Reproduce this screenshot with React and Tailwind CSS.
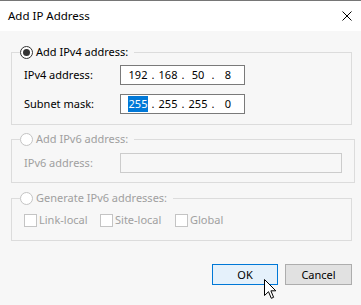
import React from "react";

const font = { fontFamily: '"Noto Sans", "Open Sans", sans-serif' };

function Radio({ checked, disabled }) {
  return (
    <span
      className={
        "flex items-center justify-center w-[13px] h-[13px] rounded-full border bg-white shrink-0 " +
        (disabled ? "border-[#c4c4c4]" : "border-[#333333]")
      }
    >
      {checked && <span className="block w-[7px] h-[7px] rounded-full bg-[#333333]" />}
    </span>
  );
}

function Checkbox() {
  return <span className="block w-[13px] h-[13px] border border-[#c4c4c4] bg-white shrink-0" />;
}

function Legend({ checked, disabled, children }) {
  return (
    <legend className="ml-[8px] pr-[6px]">
      <div className="flex items-center h-[16px] gap-[3px]">
        <Radio checked={checked} disabled={disabled} />
        <span className={disabled ? "text-[#a0a0a0]" : "text-black"}>{children}</span>
      </div>
    </legend>
  );
}

function IpInput({ parts, highlightFirst }) {
  return (
    <div className="flex items-center w-[125px] h-[20px] border border-[#7a7a7a] bg-white pl-[6px]">
      {parts.map((p, i) => (
        <React.Fragment key={i}>
          {i > 0 && <span className="w-[8px] text-center">.</span>}
          <span className="w-[22px] flex justify-center">
            {highlightFirst && i === 0 ? (
              <span className="bg-[#0078d7] text-white px-[1px] leading-[16px]">{p}</span>
            ) : (
              <span>{p}</span>
            )}
          </span>
        </React.Fragment>
      ))}
    </div>
  );
}

export default function App() {
  return (
    <div
      className="relative w-[361px] h-[305px] overflow-hidden bg-[#f7f7f7] text-[11px] text-black leading-[16px]"
      style={font}
    >
      <div className="h-[31px] border-t border-[#767676] bg-white flex items-center justify-between pl-[8px] pr-[9px]">
        <span className="text-[11.5px] text-black">Add IP Address</span>
        <svg width="10" height="10" viewBox="0 0 10 10" className="mt-[-1px]">
          <path d="M0.5 0.5 L9.5 9.5 M9.5 0.5 L0.5 9.5" stroke="#000" strokeWidth="1" />
        </svg>
      </div>

      <fieldset className="ml-[11px] w-[341px] mt-[13px] border border-[#dcdcdc] p-0">
        <Legend checked>Add IPv4 address:</Legend>
        <div className="px-[12px] pt-[5px] pb-[10px] flex flex-col gap-[9px]">
          <div className="flex items-center h-[20px]">
            <span className="w-[96px]">IPv4 address:</span>
            <IpInput parts={["192", "168", "50", "8"]} />
          </div>
          <div className="flex items-center h-[20px]">
            <span className="w-[96px]">Subnet mask:</span>
            <IpInput parts={["255", "255", "255", "0"]} highlightFirst />
          </div>
        </div>
      </fieldset>

      <fieldset className="ml-[11px] w-[341px] mt-[6px] border border-[#dcdcdc] p-0">
        <Legend disabled>Add IPv6 address:</Legend>
        <div className="px-[12px] pt-[6px] pb-[9px]">
          <div className="flex items-center h-[20px]">
            <span className="w-[96px] text-[#a0a0a0]">IPv6 address:</span>
            <div className="w-[222px] h-[20px] border border-[#cccccc] bg-[#f7f7f7]" />
          </div>
        </div>
      </fieldset>

      <fieldset className="ml-[11px] w-[341px] mt-[7px] border border-[#dcdcdc] p-0">
        <Legend disabled>Generate IPv6 addresses:</Legend>
        <div className="px-[12px] pt-[6px] pb-[12px]">
          <div className="flex items-center h-[16px] text-[#a0a0a0]">
            <div className="w-[76px] flex items-center gap-[2px]">
              <Checkbox />
              <span>Link-local</span>
            </div>
            <div className="w-[75px] flex items-center gap-[2px]">
              <Checkbox />
              <span>Site-local</span>
            </div>
            <div className="flex items-center gap-[2px]">
              <Checkbox />
              <span>Global</span>
            </div>
          </div>
        </div>
      </fieldset>

      <div className="mt-[23px] flex justify-end gap-[7px] pr-[9px]">
        <button className="w-[66px] h-[21px] border border-[#0078d7] bg-[#e5f1fb] flex items-center justify-center">
          OK
        </button>
        <button className="w-[67px] h-[21px] border border-[#adadad] bg-[#e1e1e1] flex items-center justify-center">
          Cancel
        </button>
      </div>

      <svg
        className="absolute left-[264px] top-[279px]"
        width="13"
        height="21"
        viewBox="0 0 13 21"
      >
        <path
          d="M0.5 0.5 L0.5 16.5 L4.5 12.7 L7.3 19.3 L9.6 18.3 L6.9 11.8 L11.8 11.8 Z"
          fill="#fff"
          stroke="#000"
          strokeWidth="1"
          strokeLinejoin="miter"
        />
      </svg>
    </div>
  );
}
